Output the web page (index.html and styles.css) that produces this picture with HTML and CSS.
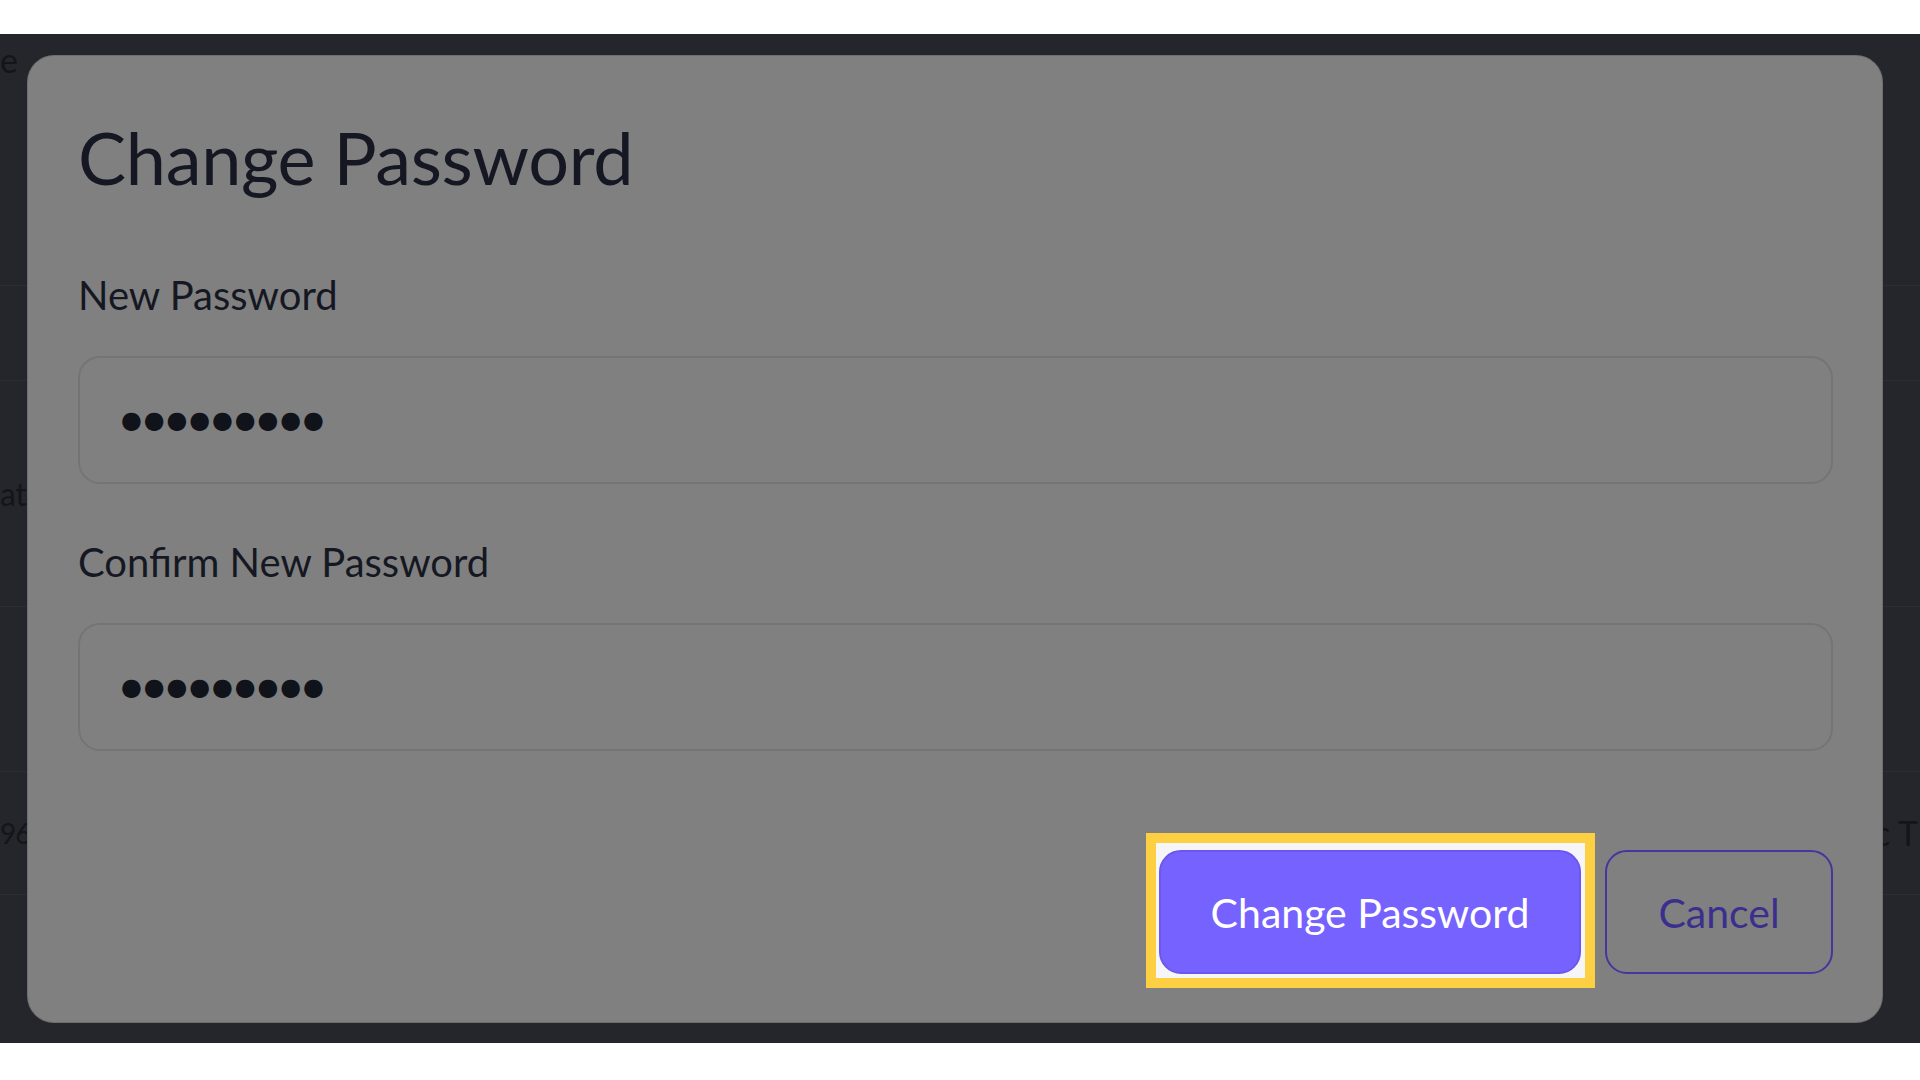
FILE: index.html
```html
<!DOCTYPE html>
<html lang="en">
<head>
<meta charset="utf-8">
<title>Change Password</title>
<link rel="stylesheet" href="styles.css">
</head>
<body>
<div class="screen">
  <div class="page">
    <div class="row row-head">
      <div class="peek-l peek-top">e</div>
    </div>
    <div class="row row-1"></div>
    <div class="row row-2">
      <div class="peek-l peek-word">at</div>
    </div>
    <div class="row row-3"></div>
    <div class="row row-4">
      <div class="peek-l peek-num">96</div>
      <div class="peek-r">c T</div>
    </div>
    <div class="row row-5"></div>
  </div>

  <div class="modal">
    <h1 class="title">Change Password</h1>
    <label class="label label-first">New Password</label>
    <div class="field"><span class="mask">●●●●●●●●●</span></div>
    <label class="label label-second">Confirm New Password</label>
    <div class="field"><span class="mask">●●●●●●●●●</span></div>
    <div class="actions">
      <div class="highlight">
        <button class="btn btn-primary" type="button">Change Password</button>
      </div>
      <button class="btn btn-outline" type="button">Cancel</button>
    </div>
  </div>
</div>
</body>
</html>
```
FILE: styles.css
```css
html, body {
  margin: 0;
  padding: 0;
  background: #ffffff;
}

body {
  width: 1920px;
  height: 1080px;
  overflow: hidden;
  font-family: "Lato", "Open Sans", sans-serif;
}

.screen {
  position: relative;
  margin-top: 34px;
  height: 1009px;
  background: #25262b;
  overflow: hidden;
}

/* underlying page, dimmed */
.page {
  display: flex;
  flex-direction: column;
  height: 100%;
}

.row {
  display: flex;
  justify-content: space-between;
  align-items: center;
  border-bottom: 1px solid #2d2e33;
  font-size: 34px;
  line-height: 44px;
  color: #141519;
}

.row-head { height: 251px; align-items: flex-start; }
.row-1 { height: 94px; }
.row-2 { height: 225px; }
.row-3 { height: 164px; }
.row-4 { height: 122px; }
.row-5 { flex: 1; border-bottom: none; }

.peek-l {
  white-space: nowrap;
  padding-left: 0;
}

.peek-top {
  margin-top: 4px;
}

.peek-word {
  font-size: 32px;
  letter-spacing: -0.5px;
}

.peek-num {
  font-size: 28px;
  letter-spacing: -1px;
}

.peek-r {
  white-space: nowrap;
  padding-right: 2px;
  font-size: 34px;
}

/* modal */
.modal {
  position: absolute;
  left: 28px;
  top: 22px;
  width: 1854px;
  height: 966px;
  box-sizing: border-box;
  padding: 56px 49px 48px 50px;
  background: #808080;
  border-radius: 26px;
  box-shadow: 0 0 0 1px #6e6e6e;
  display: flex;
  flex-direction: column;
}

.title {
  margin: 0;
  font-size: 72px;
  line-height: 88px;
  margin-top: 1px;
  font-weight: 400;
  color: #151822;
  letter-spacing: -0.3px;
}

.label {
  display: block;
  font-size: 40px;
  line-height: 48px;
  color: #151822;
}

.label-first { margin-top: 70px; }
.label-second { margin-top: 54px; }

.field {
  margin-top: 37px;
  height: 128px;
  box-sizing: border-box;
  border: 2px solid #737477;
  border-radius: 22px;
  padding-left: 41px;
  display: flex;
  align-items: center;
}

.mask {
  font-family: "DejaVu Sans", sans-serif;
  font-size: 24px;
  letter-spacing: 1.8px;
  color: #11131b;
  line-height: 1;
}

.actions {
  margin-top: auto;
  display: flex;
  justify-content: flex-end;
  gap: 24px;
}

.highlight {
  position: relative;
  isolation: isolate;
  display: flex;
}

.highlight::before {
  content: "";
  position: absolute;
  top: -17px;
  left: -13px;
  right: -14px;
  bottom: -14px;
  border: 10px solid #fdd043;
  background: #f6f6f8;
  z-index: -1;
}

.btn {
  height: 124px;
  box-sizing: border-box;
  border-radius: 22px;
  font-family: "Lato", "Open Sans", sans-serif;
  font-size: 41px;
  font-weight: 400;
  cursor: pointer;
  padding: 0;
}

.btn-primary {
  width: 422px;
  background: #7662fe;
  border: 2px solid #6c57ee;
  color: #ffffff;
}

.btn-outline {
  width: 228px;
  background: transparent;
  border: 2px solid #43369c;
  color: #3b2f8e;
}
```
